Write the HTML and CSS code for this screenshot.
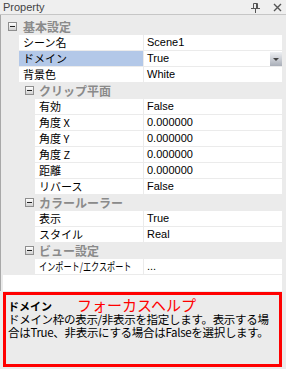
FILE: index.html
```html
<!DOCTYPE html>
<html lang="ja">
  <head>
    <meta charset="UTF-8" />
    <title>Property</title>
    <link rel="stylesheet" href="styles.css">
  </head>
  <body>
    <div class="pane">
      <div class="titlebar">
        <span class="title">Property</span>
        <span class="tools">
          <svg width="9" height="11" viewBox="0 0 9 11"><path d="M2.5 1.5h4v5h-4z M0 6.5h9 M4.5 7v4 M5.5 2v4" fill="none" stroke="#555" stroke-width="1"/></svg>
          <svg width="9" height="9" viewBox="0 0 9 9"><path d="M1 1l7 7M8 1L1 8" stroke="#555" stroke-width="1.4"/></svg>
        </span>
      </div>

      <div class="grid">
        <div class="cat lvl0"><span class="tog"></span>基本設定</div>
        <div class="row lvl1"><div class="name">シーン名</div><div class="val">Scene1</div></div>
        <div class="row lvl1 sel"><div class="name">ドメイン</div><div class="val">True<span class="drop"></span></div></div>
        <div class="row lvl1"><div class="name">背景色</div><div class="val">White</div></div>

        <div class="cat lvl1c"><span class="tog"></span>クリップ平面</div>
        <div class="row lvl2"><div class="name">有効</div><div class="val">False</div></div>
        <div class="row lvl2"><div class="name">角度 X</div><div class="val">0.000000</div></div>
        <div class="row lvl2"><div class="name">角度 Y</div><div class="val">0.000000</div></div>
        <div class="row lvl2"><div class="name">角度 Z</div><div class="val">0.000000</div></div>
        <div class="row lvl2"><div class="name">距離</div><div class="val">0.000000</div></div>
        <div class="row lvl2"><div class="name">リバース</div><div class="val">False</div></div>

        <div class="cat lvl1c"><span class="tog"></span>カラールーラー</div>
        <div class="row lvl2"><div class="name">表示</div><div class="val">True</div></div>
        <div class="row lvl2"><div class="name">スタイル</div><div class="val">Real</div></div>

        <div class="cat lvl1c"><span class="tog"></span>ビュー設定</div>
        <div class="row lvl2"><div class="name"><span class="narrow">インポート/エクスポート</span></div><div class="val">...</div></div>

        <div class="blank"></div>
      </div>

      <div class="help">
        <div class="help-head">
          <span class="help-title">ドメイン</span>
          <span class="help-note">フォーカスヘルプ</span>
        </div>
        <div class="help-desc">ドメイン枠の表示/非表示を指定します。表示する場<br>合はTrue、非表示にする場合はFalseを選択します。</div>
      </div>
    </div>
  </body>
</html>
```

FILE: styles.css
```css
body {
  margin: 0;
}

.pane {
  width: 286px;
  height: 369px;
  background: #ebebeb;
  font-family: "Liberation Sans", "Noto Sans CJK JP", sans-serif;
  overflow: hidden;
}

.titlebar {
  height: 14px;
  display: flex;
  align-items: center;
  justify-content: space-between;
  padding: 0 4px 0 3px;
  background: #efefef;
  border-bottom: 1px solid #c6c6c6;
}

.title {
  font-size: 11px;
  color: #444;
}

.tools {
  display: flex;
  align-items: center;
  gap: 13px;
}

.tools svg {
  display: block;
}

.grid {
  padding: 4px 4px 0 0;
  border-left: 1px solid #a8a8a8;
}

.row,
.cat {
  height: 15px;
  margin-bottom: 1px;
}

.row {
  display: grid;
  grid-template-columns: 1fr 138px;
  column-gap: 1px;
}

.lvl1 {
  padding-left: 18px;
}

.lvl2 {
  padding-left: 34px;
}

.name,
.val {
  background: #fff;
  font-size: 11px;
  line-height: 15px;
  color: #000;
  white-space: nowrap;
  overflow: hidden;
}

.name {
  font-family: "Noto Sans CJK JP", sans-serif;
  padding-left: 4px;
}

.narrow {
  display: inline-block;
  transform: scaleX(0.74);
  transform-origin: left center;
}

.val {
  padding-left: 3px;
  display: flex;
  justify-content: space-between;
}

.sel .name {
  background: #b3c8e8;
}

.drop {
  width: 12px;
  height: 14px;
  margin-top: 1px;
  background: linear-gradient(#eef0f3, #a9aeb8);
  position: relative;
}

.drop::after {
  content: "";
  position: absolute;
  left: 3px;
  top: 6px;
  border-left: 3px solid transparent;
  border-right: 3px solid transparent;
  border-top: 3px solid #444;
}

.cat {
  display: flex;
  align-items: center;
  font-family: "Noto Sans CJK JP", sans-serif;
  font-size: 12px;
  font-weight: bold;
  color: #8a8a8a;
}

.lvl0 {
  padding-left: 7px;
  gap: 6px;
}

.lvl1c {
  padding-left: 24px;
  gap: 5px;
}

.tog {
  width: 7px;
  height: 7px;
  border: 1px solid #8e8e8e;
  background: linear-gradient(#fff, #d0d0d0);
  position: relative;
  flex: none;
}

.tog::after {
  content: "";
  position: absolute;
  left: 1px;
  top: 3px;
  width: 5px;
  height: 1px;
  background: #222;
}

.blank {
  height: 16px;
  margin-left: 2px;
  background: #fff;
}

.help {
  box-sizing: border-box;
  height: 75px;
  margin: 1px 4px 0 3px;
  border: 3px solid #f00;
  padding: 1px 2px;
  background: #ebebeb;
  font-family: "Noto Sans CJK JP", sans-serif;
}

.help-head {
  display: flex;
  align-items: flex-end;
  gap: 25px;
  height: 17px;
}

.help-title {
  font-size: 11px;
  font-weight: bold;
  line-height: 14px;
}

.help-note {
  font-size: 15px;
  line-height: 17px;
  color: #f00;
}

.help-desc {
  font-size: 11.5px;
  line-height: 13px;
  letter-spacing: -0.3px;
  white-space: nowrap;
  color: #000;
}
```
